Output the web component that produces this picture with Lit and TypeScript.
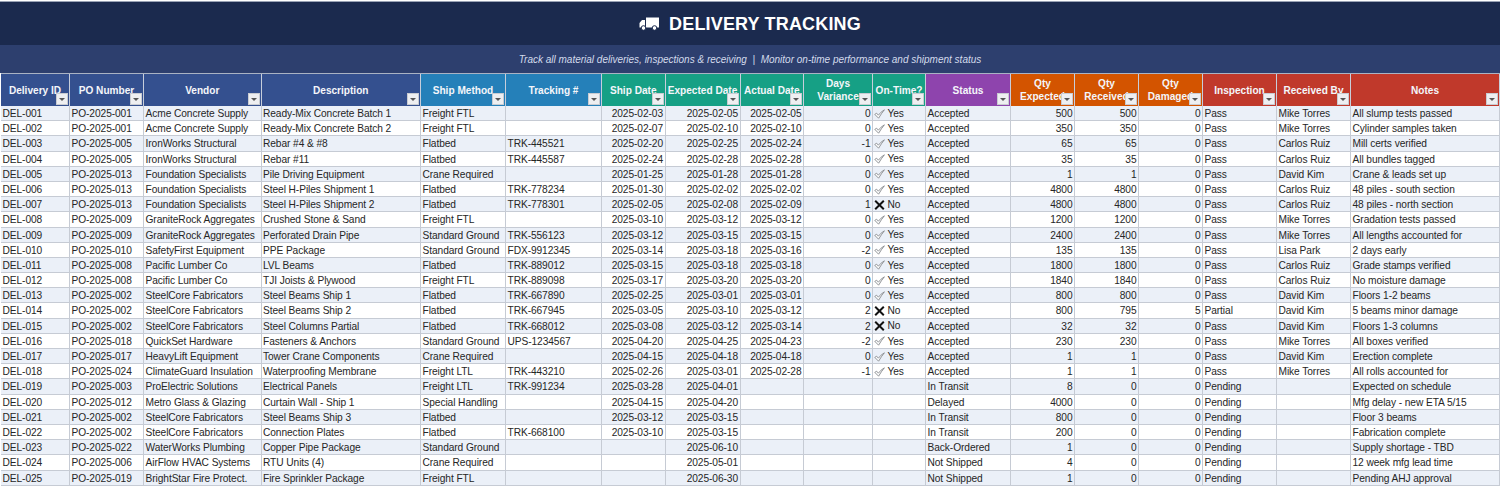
import { LitElement, html, css, svg } from "lit";
import { customElement } from "lit/decorators.js";

type Col = { t: string; w: number; c: string; align?: string };
const cols: Col[] = [
  { t: "Delivery ID", w: 69, c: "navy" },
  { t: "PO Number", w: 74, c: "navy" },
  { t: "Vendor", w: 117.5, c: "navy" },
  { t: "Description", w: 159.5, c: "navy" },
  { t: "Ship Method", w: 85, c: "blue" },
  { t: "Tracking #", w: 96, c: "blue" },
  { t: "Ship Date", w: 63.5, c: "green", align: "r" },
  { t: "Expected Date", w: 75, c: "green", align: "r" },
  { t: "Actual Date", w: 63.5, c: "green", align: "r" },
  { t: "Days\nVariance", w: 69, c: "green", align: "r" },
  { t: "On-Time?", w: 53, c: "green" },
  { t: "Status", w: 85, c: "purple" },
  { t: "Qty\nExpected", w: 64, c: "orange", align: "r" },
  { t: "Qty\nReceived", w: 64, c: "orange", align: "r" },
  { t: "Qty\nDamaged", w: 64, c: "orange", align: "r" },
  { t: "Inspection", w: 74, c: "red" },
  { t: "Received By", w: 74, c: "red" },
  { t: "Notes", w: 149, c: "red" },
];

const rows: string[] = [
  "DEL-001|PO-2025-001|Acme Concrete Supply|Ready-Mix Concrete Batch 1|Freight FTL||2025-02-03|2025-02-05|2025-02-05|0|Y|Accepted|500|500|0|Pass|Mike Torres|All slump tests passed",
  "DEL-002|PO-2025-001|Acme Concrete Supply|Ready-Mix Concrete Batch 2|Freight FTL||2025-02-07|2025-02-10|2025-02-10|0|Y|Accepted|350|350|0|Pass|Mike Torres|Cylinder samples taken",
  "DEL-003|PO-2025-005|IronWorks Structural|Rebar #4 & #8|Flatbed|TRK-445521|2025-02-20|2025-02-25|2025-02-24|-1|Y|Accepted|65|65|0|Pass|Carlos Ruiz|Mill certs verified",
  "DEL-004|PO-2025-005|IronWorks Structural|Rebar #11|Flatbed|TRK-445587|2025-02-24|2025-02-28|2025-02-28|0|Y|Accepted|35|35|0|Pass|Carlos Ruiz|All bundles tagged",
  "DEL-005|PO-2025-013|Foundation Specialists|Pile Driving Equipment|Crane Required||2025-01-25|2025-01-28|2025-01-28|0|Y|Accepted|1|1|0|Pass|David Kim|Crane & leads set up",
  "DEL-006|PO-2025-013|Foundation Specialists|Steel H-Piles Shipment 1|Flatbed|TRK-778234|2025-01-30|2025-02-02|2025-02-02|0|Y|Accepted|4800|4800|0|Pass|Carlos Ruiz|48 piles - south section",
  "DEL-007|PO-2025-013|Foundation Specialists|Steel H-Piles Shipment 2|Flatbed|TRK-778301|2025-02-05|2025-02-08|2025-02-09|1|N|Accepted|4800|4800|0|Pass|Carlos Ruiz|48 piles - north section",
  "DEL-008|PO-2025-009|GraniteRock Aggregates|Crushed Stone & Sand|Freight FTL||2025-03-10|2025-03-12|2025-03-12|0|Y|Accepted|1200|1200|0|Pass|Mike Torres|Gradation tests passed",
  "DEL-009|PO-2025-009|GraniteRock Aggregates|Perforated Drain Pipe|Standard Ground|TRK-556123|2025-03-12|2025-03-15|2025-03-15|0|Y|Accepted|2400|2400|0|Pass|Mike Torres|All lengths accounted for",
  "DEL-010|PO-2025-010|SafetyFirst Equipment|PPE Package|Standard Ground|FDX-9912345|2025-03-14|2025-03-18|2025-03-16|-2|Y|Accepted|135|135|0|Pass|Lisa Park|2 days early",
  "DEL-011|PO-2025-008|Pacific Lumber Co|LVL Beams|Flatbed|TRK-889012|2025-03-15|2025-03-18|2025-03-18|0|Y|Accepted|1800|1800|0|Pass|Carlos Ruiz|Grade stamps verified",
  "DEL-012|PO-2025-008|Pacific Lumber Co|TJI Joists & Plywood|Freight FTL|TRK-889098|2025-03-17|2025-03-20|2025-03-20|0|Y|Accepted|1840|1840|0|Pass|Carlos Ruiz|No moisture damage",
  "DEL-013|PO-2025-002|SteelCore Fabricators|Steel Beams Ship 1|Flatbed|TRK-667890|2025-02-25|2025-03-01|2025-03-01|0|Y|Accepted|800|800|0|Pass|David Kim|Floors 1-2 beams",
  "DEL-014|PO-2025-002|SteelCore Fabricators|Steel Beams Ship 2|Flatbed|TRK-667945|2025-03-05|2025-03-10|2025-03-12|2|N|Accepted|800|795|5|Partial|David Kim|5 beams minor damage",
  "DEL-015|PO-2025-002|SteelCore Fabricators|Steel Columns Partial|Flatbed|TRK-668012|2025-03-08|2025-03-12|2025-03-14|2|N|Accepted|32|32|0|Pass|David Kim|Floors 1-3 columns",
  "DEL-016|PO-2025-018|QuickSet Hardware|Fasteners & Anchors|Standard Ground|UPS-1234567|2025-04-20|2025-04-25|2025-04-23|-2|Y|Accepted|230|230|0|Pass|Mike Torres|All boxes verified",
  "DEL-017|PO-2025-017|HeavyLift Equipment|Tower Crane Components|Crane Required||2025-04-15|2025-04-18|2025-04-18|0|Y|Accepted|1|1|0|Pass|David Kim|Erection complete",
  "DEL-018|PO-2025-024|ClimateGuard Insulation|Waterproofing Membrane|Freight LTL|TRK-443210|2025-02-26|2025-03-01|2025-02-28|-1|Y|Accepted|1|1|0|Pass|Mike Torres|All rolls accounted for",
  "DEL-019|PO-2025-003|ProElectric Solutions|Electrical Panels|Freight LTL|TRK-991234|2025-03-28|2025-04-01||||In Transit|8|0|0|Pending||Expected on schedule",
  "DEL-020|PO-2025-012|Metro Glass & Glazing|Curtain Wall - Ship 1|Special Handling||2025-04-15|2025-04-20||||Delayed|4000|0|0|Pending||Mfg delay - new ETA 5/15",
  "DEL-021|PO-2025-002|SteelCore Fabricators|Steel Beams Ship 3|Flatbed||2025-03-12|2025-03-15||||In Transit|800|0|0|Pending||Floor 3 beams",
  "DEL-022|PO-2025-002|SteelCore Fabricators|Connection Plates|Flatbed|TRK-668100|2025-03-10|2025-03-15||||In Transit|200|0|0|Pending||Fabrication complete",
  "DEL-023|PO-2025-022|WaterWorks Plumbing|Copper Pipe Package|Standard Ground|||2025-06-10||||Back-Ordered|1|0|0|Pending||Supply shortage - TBD",
  "DEL-024|PO-2025-006|AirFlow HVAC Systems|RTU Units (4)|Crane Required|||2025-05-01||||Not Shipped|4|0|0|Pending||12 week mfg lead time",
  "DEL-025|PO-2025-019|BrightStar Fire Protect.|Fire Sprinkler Package|Freight FTL|||2025-06-30||||Not Shipped|1|0|0|Pending||Pending AHJ approval",
];

const check = svg`<svg class="mark" viewBox="0 0 11 10"><path d="M0.8 5.4 L2.6 4.2 L4.4 6.2 Q6.8 2.8 10.4 0.8 Q7.4 4.4 4.6 9.2 Z" fill="#fff" stroke="#84888c" stroke-width="0.9"/></svg>`;
const cross = svg`<svg class="mark" viewBox="0 0 11 10"><path d="M1.2 0.8 L9.8 9.2 M9.8 0.8 L1.2 9.2" fill="none" stroke="#111" stroke-width="2"/></svg>`;

@customElement("app-root")
export class AppRoot extends LitElement {
  static styles = css`
    :host {
      display: block;
      width: 1500px;
      height: 486px;
      overflow: hidden;
      background: #fff;
      font-family: "Liberation Sans", Arial, sans-serif;
      color: #262626;
    }
    .title {
      height: 44px;
      margin-top: 1px;
      padding-top: 1px;
      background: #1b2a4e;
      border-top: 1px solid #9aa3b5;
      box-sizing: border-box;
      display: flex;
      align-items: center;
      justify-content: center;
      gap: 10px;
      color: #fff;
      font-weight: 700;
      font-size: 18px;
      letter-spacing: 0.17px;
    }
    .title svg { width: 20px; height: 14px; }
    .sub {
      height: 28px;
      background: #2d3f6e;
      display: flex;
      align-items: center;
      justify-content: center;
      color: #d3dbec;
      font-style: italic;
      font-size: 10px;
      white-space: pre;
    }
    .grid {
      display: grid;
      border-top: 1px solid #aab3c4;
      margin-left: 1px;
      grid-template-rows: 32px;
      grid-auto-rows: 15.2px;
    }
    .h {
      position: relative;
      height: 32px;
      box-sizing: border-box;
      display: flex;
      align-items: center;
      justify-content: center;
      text-align: center;
      color: #f4f6fa;
      font-weight: 700;
      font-size: 10.1px;
      line-height: 13px;
      border-right: 1px solid #c7cedb;
      white-space: pre;
      overflow: hidden;
    }
    .navy { background: #34508f; }
    .blue { background: #2580b9; }
    .green { background: #16a085; }
    .purple { background: #8e44ad; }
    .orange { background: #d35400; }
    .red { background: #c0392b; }
    .btn {
      position: absolute;
      right: 1px;
      bottom: 1px;
      width: 12px;
      height: 12px;
      background: #eeeff1;
      border: 1px solid #c9ccd2;
      box-sizing: border-box;
      display: flex;
      align-items: center;
      justify-content: center;
    }
    .btn::after {
      content: "";
      border-left: 3px solid transparent;
      border-right: 3px solid transparent;
      border-top: 3px solid #555;
    }
    .c {
      box-sizing: border-box;
      height: 15.2px;
      line-height: 15.6px;
      font-size: 10.2px;
      letter-spacing: -0.08px;
      padding: 0 1.5px;
      white-space: nowrap;
      overflow: hidden;
      border-right: 1px solid #c6cbd4;
      border-bottom: 1px solid #c6cbd4;
      color: #262626;
    }
    .c.r { text-align: right; }
    .odd { background: #ebf0f8; }
    .even { background: #fff; }
    .c.ot { display: flex; align-items: center; gap: 3px; padding-left: 0.5px; padding-top: 1px; }
    .mark { width: 11px; height: 10px; flex: none; }
  `;

  render() {
    const tpl = cols.map((c) => c.w + "px").join(" ");
    return html`
      <div class="title">
        <svg viewBox="0 0 20 14" aria-hidden="true">
          <rect x="7" y="0.5" width="13" height="10" fill="#fff"></rect>
          <path d="M6 3 H3 L0.5 6 V10.5 H6 Z" fill="#fff"></path>
          <circle cx="4.5" cy="11" r="2.3" fill="#fff" stroke="#1b2a4e"></circle>
          <circle cx="15.5" cy="11" r="2.3" fill="#fff" stroke="#1b2a4e"></circle>
        </svg>
        <span>DELIVERY TRACKING</span>
      </div>
      <div class="sub">Track all material deliveries, inspections &amp; receiving  |  Monitor on-time performance and shipment status</div>
      <div class="grid" style="grid-template-columns:${tpl}">
        ${cols.map(
          (c) => html`<div class="h ${c.c}"><span>${c.t}</span><i class="btn"></i></div>`
        )}
        ${rows.map((r, i) =>
          r.split("|").map((v, j) => {
            const bg = i % 2 === 0 ? "odd" : "even";
            if (j === 10) {
              return html`<div class="c ot ${bg}">
                ${v === "Y" ? html`${check}<span>Yes</span>` : v === "N" ? html`${cross}<span>No</span>` : ""}
              </div>`;
            }
            return html`<div class="c ${cols[j].align === "r" ? "r" : ""} ${bg}">${v}</div>`;
          })
        )}
      </div>
    `;
  }
}
